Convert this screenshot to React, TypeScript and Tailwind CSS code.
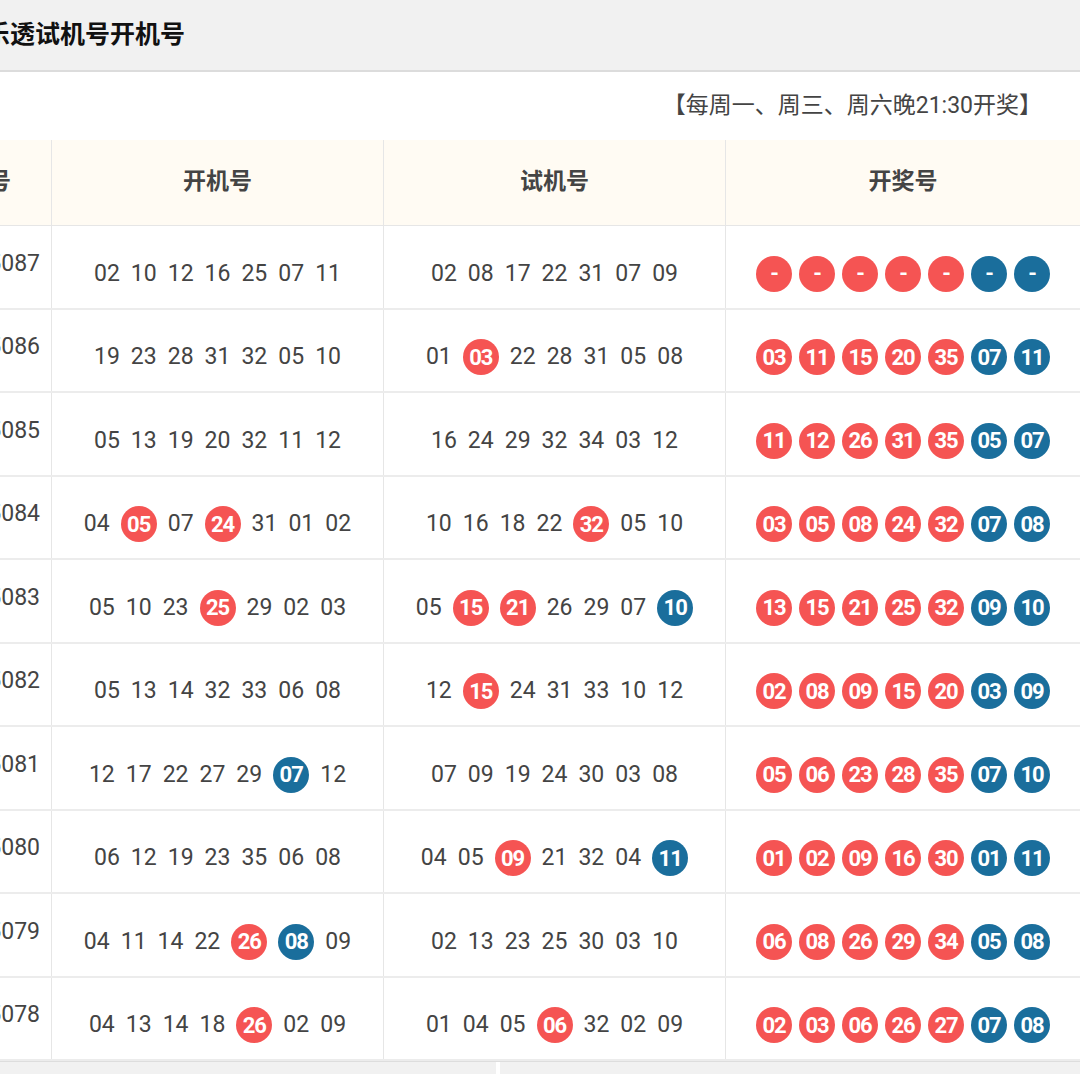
import React from "react";

type Row = { p: string; k: string[]; s: string[]; d: string[] };
const rows: Row[] = [
  { p: "25087", k: ["02","10","12","16","25","07","11"], s: ["02","08","17","22","31","07","09"], d: ["-","-","-","-","-","-","-"] },
  { p: "25086", k: ["19","23","28","31","32","05","10"], s: ["01","03r","22","28","31","05","08"], d: ["03","11","15","20","35","07","11"] },
  { p: "25085", k: ["05","13","19","20","32","11","12"], s: ["16","24","29","32","34","03","12"], d: ["11","12","26","31","35","05","07"] },
  { p: "25084", k: ["04","05r","07","24r","31","01","02"], s: ["10","16","18","22","32r","05","10"], d: ["03","05","08","24","32","07","08"] },
  { p: "25083", k: ["05","10","23","25r","29","02","03"], s: ["05","15r","21r","26","29","07","10b"], d: ["13","15","21","25","32","09","10"] },
  { p: "25082", k: ["05","13","14","32","33","06","08"], s: ["12","15r","24","31","33","10","12"], d: ["02","08","09","15","20","03","09"] },
  { p: "25081", k: ["12","17","22","27","29","07b","12"], s: ["07","09","19","24","30","03","08"], d: ["05","06","23","28","35","07","10"] },
  { p: "25080", k: ["06","12","19","23","35","06","08"], s: ["04","05","09r","21","32","04","11b"], d: ["01","02","09","16","30","01","11"] },
  { p: "25079", k: ["04","11","14","22","26r","08b","09"], s: ["02","13","23","25","30","03","10"], d: ["06","08","26","29","34","05","08"] },
  { p: "25078", k: ["04","13","14","18","26r","02","09"], s: ["01","04","05","06r","32","02","09"], d: ["02","03","06","26","27","07","08"] },
];

const font = { fontFamily: "Roboto, 'Noto Sans CJK SC', sans-serif" };

function Ball({ n, blue }: { n: string; blue?: boolean }) {
  return (
    <span className={`inline-flex items-center justify-center w-[36px] h-[36px] rounded-full text-white font-bold text-[22px] tracking-[-1px] ${blue ? "bg-[#1a6e9c]" : "bg-[#f55453]"}`}>{n}</span>
  );
}

function Nums({ list }: { list: string[] }) {
  return (
    <div className="flex items-center justify-center gap-[11px] text-[23px] text-[#444] pt-[14px]">
      {list.map((x, i) => {
        if (x.endsWith("r")) return <Ball key={i} n={x.slice(0, 2)} />;
        if (x.endsWith("b")) return <Ball key={i} n={x.slice(0, 2)} blue />;
        return <span key={i}>{x}</span>;
      })}
    </div>
  );
}

export default function App() {
  return (
    <div className="w-[1080px] h-[1074px] overflow-hidden bg-white flex flex-col" style={font}>
      <div className="h-[72px] shrink-0 bg-[#f1f1f1] border-b-2 border-[#dcdcdc] flex items-center">
        <span className="ml-[-40px] text-[25px] font-bold text-[#111]">大乐透试机号开机号</span>
      </div>
      <div className="h-[68px] shrink-0 flex items-center justify-end pr-[38px] text-[23px] text-[#444]">【每周一、周三、周六晚21:30开奖】</div>
      <div className="ml-[-78px] w-[1200px] flex flex-col">
        <div className="h-[86px] flex bg-[#fffbf3] text-[23px] font-bold text-[#444] border-b border-[#e6e6e6]">
          <div className="w-[130px] flex items-center justify-end pr-[40px] border-r border-[#e6e6e6]">期号</div>
          <div className="w-[332px] flex items-center justify-center border-r border-[#e6e6e6]">开机号</div>
          <div className="w-[342px] flex items-center justify-center border-r border-[#e6e6e6]">试机号</div>
          <div className="w-[354px] flex items-center justify-center">开奖号</div>
        </div>
        {rows.map((r, i) => (
          <div key={i} className="h-[83.5px] flex border-b-2 border-[#ececec]">
            <div className="w-[130px] flex items-center justify-end pr-[11px] pb-[6px] text-[23px] text-[#444] border-r border-[#e6e6e6]">{r.p}</div>
            <div className="w-[332px] flex items-center justify-center border-r border-[#e6e6e6]"><Nums list={r.k} /></div>
            <div className="w-[342px] flex items-center justify-center border-r border-[#e6e6e6]"><Nums list={r.s} /></div>
            <div className="w-[354px] flex items-center justify-center gap-[7px] pt-[14px]">
              {r.d.map((n, j) => <Ball key={j} n={n} blue={j >= 5} />)}
            </div>
          </div>
        ))}
      </div>
      <div className="flex-1 bg-[#f1f1f1] flex border-t border-[#ddd]">
        <div className="w-[500px] border-r-4 border-white" />
      </div>
    </div>
  );
}
